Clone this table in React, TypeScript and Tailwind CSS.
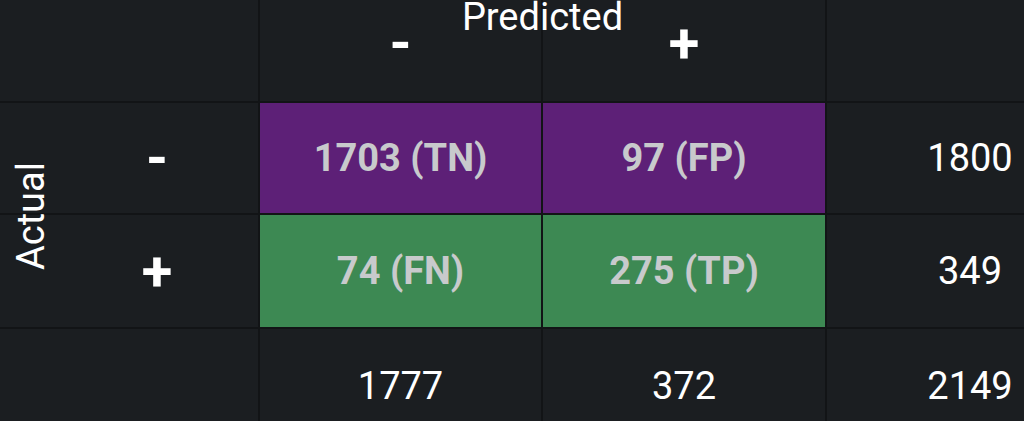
import React from 'react'

// confusion matrix numbers
const matrix = [
  { sign: '-', cells: [{ label: '1703 (TN)', tone: 'purple' }, { label: '97 (FP)', tone: 'purple' }], total: 1800 },
  { sign: '+', cells: [{ label: '74 (FN)', tone: 'green' }, { label: '275 (TP)', tone: 'green' }], total: 349 },
]
const colTotals = [1777, 372, 2149]

function Cell({ children, className = '' }: { children?: React.ReactNode; className?: string }) {
  return <div className={`flex items-center justify-center bg-[#1b1e21] ${className}`}>{children}</div>
}

export default function App() {
  return (
    <div className="relative w-[1024px] h-[421px] overflow-hidden bg-[#1b1e21] font-[Roboto,sans-serif] text-white">
      <div className="grid grid-cols-[258px_281px_282px_286px] grid-rows-[101px_110px_112px_114px] gap-[2px] bg-[#121416] w-max">
        {/* header */}
        <Cell />
        <Cell className="pb-4 text-[56px] font-bold leading-none">-</Cell>
        <Cell className="pb-4 text-[56px] font-bold leading-none">+</Cell>
        <Cell />

        {matrix.map((row) => (
          <React.Fragment key={row.sign}>
            <Cell className="pl-14 text-[56px] font-bold leading-none">{row.sign}</Cell>
            {row.cells.map((c) => (
              <Cell
                key={c.label}
                className={`${c.tone === 'purple' ? 'bg-[#5d2077]' : 'bg-[#3d8953]'} text-[38px] font-bold text-[#c8cacc]`}
              >
                {c.label}
              </Cell>
            ))}
            <Cell className="text-[38px]">{row.total}</Cell>
          </React.Fragment>
        ))}

        <Cell />
        {colTotals.map((t) => (
          <Cell key={t} className="text-[38px]">{t}</Cell>
        ))}
      </div>

      {/* axis labels sit over the grid lines */}
      <div className="absolute left-[260px] top-0 w-[565px] flex justify-center text-[38px] leading-[0.9]">
        Predicted
      </div>
      <div className="absolute left-0 top-[103px] w-[62px] h-[225px] flex items-center justify-center">
        <span className="-rotate-90 text-[38px] leading-none whitespace-nowrap">Actual</span>
      </div>
    </div>
  )
}
